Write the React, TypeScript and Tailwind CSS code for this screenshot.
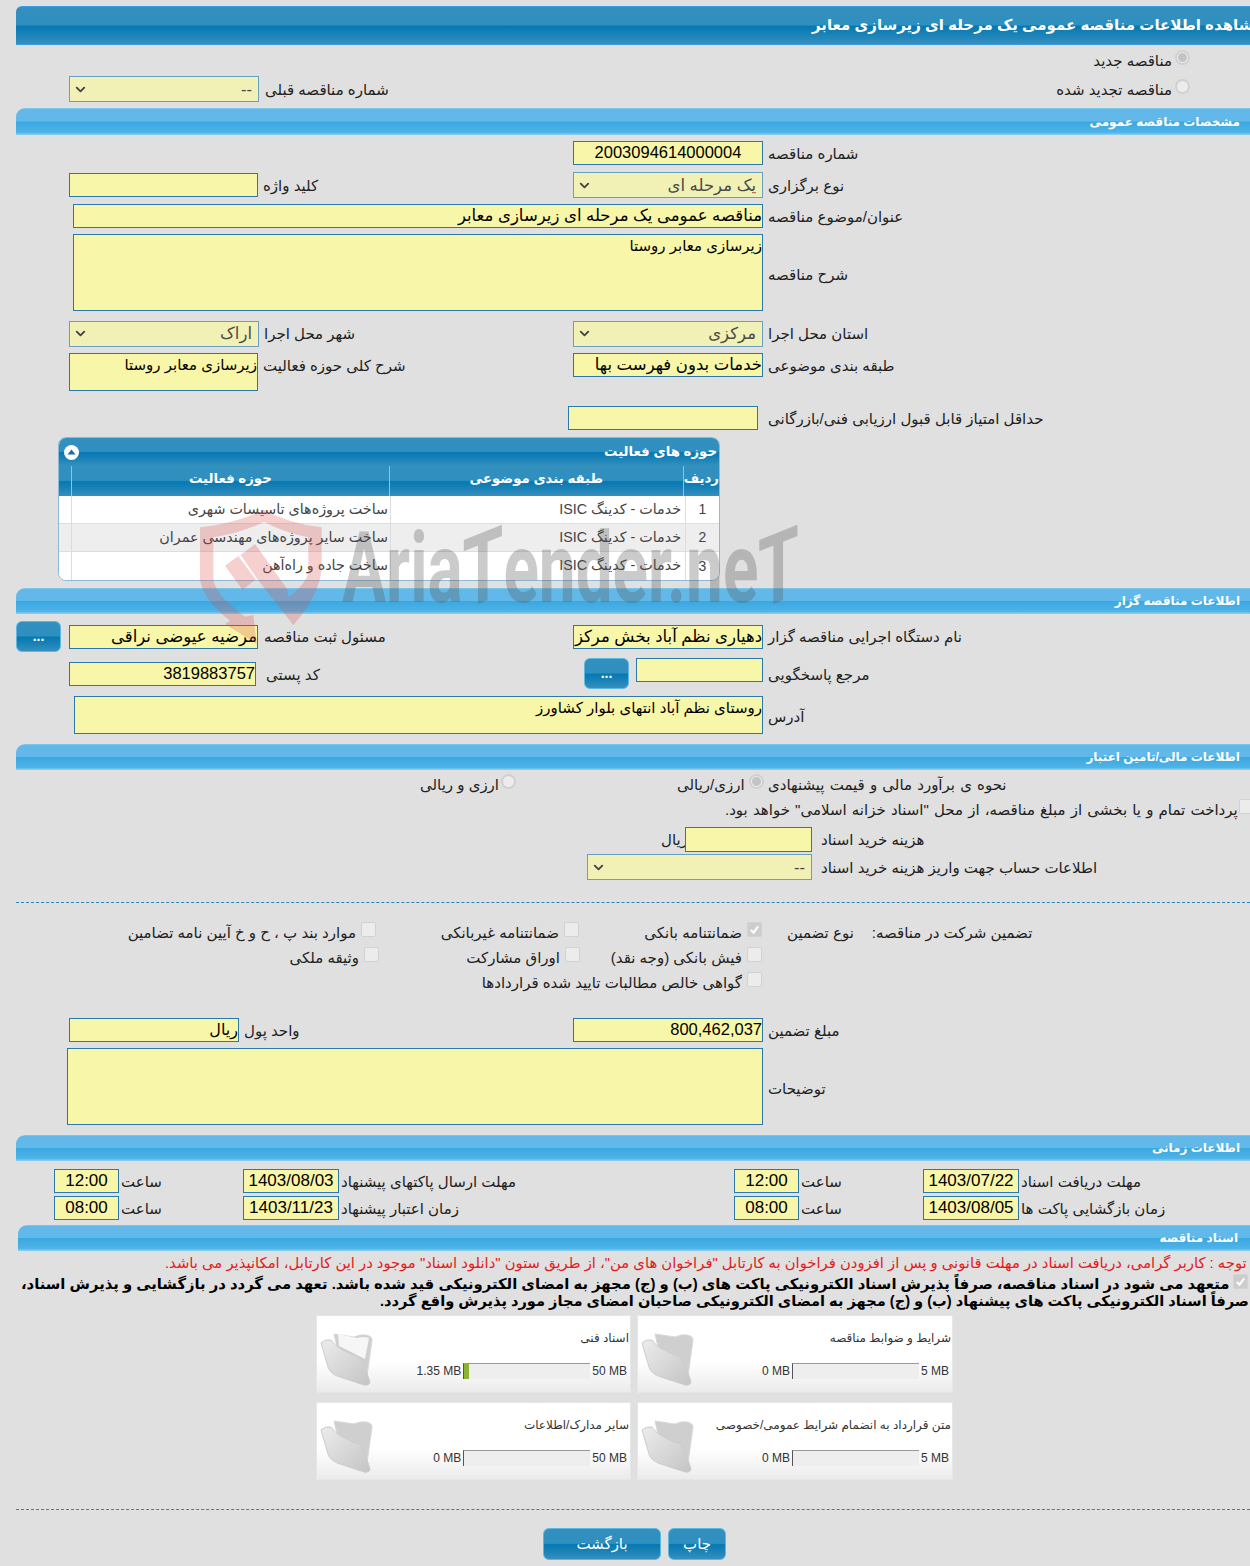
import React from "react";
import { ChevronDown } from "lucide-react";

const FONT = "font-['Liberation_Sans','DejaVu_Sans',sans-serif]";
const SECTION_BG =
  "bg-[linear-gradient(to_bottom,#8fd3f1_0,#62b9e9_4%,#62b9e9_48%,#3aa8e1_52%,#4fb3e6_90%,#8ed4f2_100%)]";
const DARK_BG =
  "bg-[linear-gradient(to_bottom,#3290bf_0,#2f8fbe_48%,#0678b2_52%,#1f85b8_80%,#3690bd_100%)]";

function Section({ title, ml = "ml-[16px]", mt, h = "h-[26px]", pr = "pr-[10px]" }: { title: string; ml?: string; mt: string; h?: string; pr?: string }) {
  return (
    <div className={`${ml} ${mt} ${h} ${pr} ${SECTION_BG} rounded-tl-[9px] flex items-center justify-end`}>
      <span dir="rtl" className="text-white font-bold text-[12px] whitespace-nowrap">{title}</span>
    </div>
  );
}

function Input({ w, h = "h-[24px]", children, cls = "", center }: { w: string; h?: string; children?: React.ReactNode; cls?: string; center?: boolean }) {
  return (
    <div
      dir="rtl"
      className={`${w} ${h} ${cls} shrink-0 bg-[#f8f6a8] border border-[#2b78ab] text-black whitespace-nowrap overflow-hidden leading-[21px] ${center ? "text-center" : "text-right"}`}
    >
      {children}
    </div>
  );
}

function Select({ w, value, h = "h-[26px]" }: { w: string; value: string; h?: string }) {
  return (
    <div className={`${w} ${h} shrink-0 bg-[#f1f0b5] border border-[#6a9fc4] flex items-center justify-between pl-[3px] pr-[6px] text-[#4a4a4a]`}>
      <ChevronDown size={15} strokeWidth={3} className="text-[#444]" />
      <span dir="rtl" className="text-[16.5px]">{value}</span>
    </div>
  );
}

function Label({ children, cls = "ml-[5px]" }: { children: React.ReactNode; cls?: string }) {
  return <span dir="rtl" className={`${cls} pt-[2px] whitespace-nowrap text-[15px] text-[#222]`}>{children}</span>;
}

function Radio({ checked }: { checked?: boolean }) {
  return (
    <span className="mb-[5px] w-[15px] h-[15px] shrink-0 rounded-full bg-[#ececec] border-2 border-[#d0d0d0] flex items-center justify-center">
      {checked && <span className="w-[9px] h-[9px] rounded-full bg-[#c4c4c4]" />}
    </span>
  );
}

function Check({ checked }: { checked?: boolean }) {
  return (
    <span className={`mb-[5px] w-[15px] h-[15px] shrink-0 rounded-[2px] border border-[#d2d2d2] flex items-center justify-center ${checked ? "bg-[#cdcdcd]" : "bg-[#ececec]"}`}>
      {checked && (
        <svg width="11" height="11" viewBox="0 0 12 12">
          <path d="M2 6.5 L5 9.5 L10 2.5" fill="none" stroke="#fff" strokeWidth="2.2" />
        </svg>
      )}
    </span>
  );
}

function CheckLabel({ text, checked, cls }: { text: string; checked?: boolean; cls: string }) {
  return (
    <div className={`${cls} flex items-center justify-end`}>
      <Label cls="">{text}</Label>
      <span className="ml-[5px] flex"><Check checked={checked} /></span>
    </div>
  );
}

function BlueBtn({ w, h, children, cls = "" }: { w: string; h: string; children: React.ReactNode; cls?: string }) {
  return (
    <div className={`${w} ${h} ${cls} ${DARK_BG} shrink-0 rounded-[6px] border border-[#5cb8e0] text-white flex items-center justify-center`}>
      {children}
    </div>
  );
}

function Folder({ paper }: { paper?: boolean }) {
  return (
    <svg width="56" height="58" viewBox="0 0 56 58" className="shrink-0">
      <defs>
        <linearGradient id="folderFront" x1="0" y1="0" x2="1" y2="1">
          <stop offset="0" stopColor="#ececec" />
          <stop offset="1" stopColor="#c4c4c4" />
        </linearGradient>
      </defs>
      <path d="M15 3 L35 6 Q42 3 47 4 Q53 5 53 9 L48 45 L44 52 L20 25 Z" fill="#cfcfcf" stroke="#d8d8d8" />
      {paper && <path d="M19 3 L38 7 Q45 5 50 7 L46 28 L20 15 Z" fill="#f6f6f6" />}
      <path d="M2 12 Q6 8 12 9 Q16 15 22 18 L34 24 Q40 25 42 28 Q48 40 51 51 Q50 55 45 54 L18 45 Q11 42 9 36 Z" fill="url(#folderFront)" stroke="#cccccc" />
    </svg>
  );
}

function FileCard({ title, used, max, fill, paper }: { title: string; used: string; max: string; fill?: boolean; paper?: boolean }) {
  return (
    <div className="h-[78px] pl-[2px] pr-[1px] flex bg-[linear-gradient(to_bottom,#ffffff_0,#ffffff_60%,#ebebeb_100%)] border border-[#e6e6e6]">
      <div className="pt-[15px]"><Folder paper={paper} /></div>
      <div className="flex-1 flex flex-col items-end">
        <span dir="rtl" className="mt-[13px] h-[18px] leading-[18px] text-[12px] text-[#333] whitespace-nowrap">{title}</span>
        <div className="mt-[15px] flex items-center text-[12px] text-[#333] pr-[2px]">
          <span>{used}</span>
          <div className="ml-[2px] w-[127px] h-[16px] bg-[#eeeeee] border-t border-t-[#999] border-l border-l-[#555] flex">
            {fill && <div className="w-[5px] h-full bg-[#8ab62f]" />}
          </div>
          <span className="ml-[2px]">{max}</span>
        </div>
      </div>
    </div>
  );
}

function Cell({ w, children, pr = "pr-[2px]" }: { w: string; children: React.ReactNode; pr?: string }) {
  return <div dir="rtl" className={`${w} ${pr} h-full flex items-center border-l border-[#ddd] text-[14.3px] text-[#444] whitespace-nowrap overflow-hidden`}>{children}</div>;
}

function TableRow({ n, activity, alt, h = "h-[28px]" }: { n: string; activity: string; alt?: boolean; h?: string }) {
  return (
    <div className={`${h} flex border-b border-[#dddddd] ${alt ? "bg-[#eeeeee]" : "bg-white"}`}>
      <div className="w-[12px]" />
      <Cell w="w-[319px]">{activity}</Cell>
      <Cell w="w-[295px]" pr="pr-[4px]">خدمات - کدینگ ISIC</Cell>
      <div className="flex-1 h-full flex items-center justify-center text-[14px] text-[#444] border-l border-[#ddd]">{n}</div>
    </div>
  );
}

function Head({ w, children }: { w: string; children?: React.ReactNode }) {
  return <div dir="rtl" className={`${w} h-full pb-[5px] flex items-center justify-center border-l border-[#8cc4e0] text-white font-bold text-[13.3px] whitespace-nowrap`}>{children}</div>;
}

function Watermark() {
  return (
    <>
      <svg width="150" height="150" viewBox="0 0 450 450" className="absolute left-[190px] top-[500px] pointer-events-none">
        <g fill="#d9534f" fillOpacity="0.27">
          <path d="M222 30 Q130 72 30 82 L30 240 Q40 300 120 362 L105 372 L200 432 L190 345 L165 350 Q70 280 70 235 L70 112 Q150 100 222 66 Q290 100 355 112 L355 215 Q350 250 296 290 L310 375 Q385 290 395 210 L395 82 Q300 72 222 30 Z" />
          <path d="M105 197 L145 168 L197 238 L158 270 Z" />
          <path d="M152 165 L195 132 L292 268 L310 375 L200 235 Z" />
        </g>
      </svg>
      <div className="absolute left-[342px] top-[529px] h-[80px] text-[#555] opacity-30 font-['Roboto',sans-serif] font-bold text-[98px] leading-[80px] whitespace-nowrap origin-bottom-left scale-x-[0.67] pointer-events-none">
        Aria<span className="inline-block skew-y-[-15deg]">T</span>ender.ne<span className="inline-block skew-y-[-15deg]">T</span>
      </div>
    </>
  );
}

export default function App() {
  return (
    <div dir="ltr" className={`relative w-[1250px] h-[1566px] overflow-hidden bg-[#e0e0e0] text-[14px] ${FONT}`}>
      {/* Title */}
      <div className={`ml-[16px] mt-[6px] h-[39px] rounded-tl-[6px] border-y border-[#3a9be6] flex items-center pl-[796px] ${DARK_BG}`}>
        <span dir="rtl" className="text-white font-bold text-[15px] whitespace-nowrap w-max">مشاهده اطلاعات مناقصه عمومی یک مرحله ای زیرسازی معابر</span>
      </div>

      <div className="mt-[5px] h-[20px] flex items-center justify-end pr-[60px]">
        <Label cls="">مناقصه جدید</Label>
        <span className="ml-[3px] flex"><Radio checked /></span>
      </div>
      <div className="mt-[6px] h-[26px] flex items-center pl-[69px]">
        <Select w="w-[190px]" value="--" />
        <Label cls="ml-[6px]">شماره مناقصه قبلی</Label>
        <div className="flex-1 flex items-center justify-end pr-[60px]">
          <Label cls="">مناقصه تجدید شده</Label>
          <span className="ml-[3px] flex"><Radio /></span>
        </div>
      </div>

      <Section title="مشخصات مناقصه عمومی" mt="mt-[6px]" h="h-[27px]" />

      <div className="mt-[6px] h-[24px] flex items-center pl-[573px]">
        <Input w="w-[190px]" center cls="text-[16.5px]">2003094614000004</Input>
        <Label>شماره مناقصه</Label>
      </div>
      <div className="mt-[7px] h-[26px] flex items-center">
        <div className="w-[573px] pl-[69px] flex items-center">
          <Input w="w-[189px]" />
          <Label>کلید واژه</Label>
        </div>
        <Select w="w-[190px]" value="یک مرحله ای" />
        <Label>نوع برگزاری</Label>
      </div>
      <div className="mt-[6px] h-[24px] flex items-center pl-[73px]">
        <Input w="w-[690px]" cls="text-[16.5px]">مناقصه عمومی یک مرحله ای زیرسازی معابر</Input>
        <Label>عنوان/موضوع مناقصه</Label>
      </div>
      <div className="mt-[6px] h-[77px] flex items-center pl-[73px]">
        <Input w="w-[690px]" h="h-[77px]" cls="text-[15px]">زیرسازی معابر روستا</Input>
        <Label cls="ml-[5px] mt-[4px]">شرح مناقصه</Label>
      </div>
      <div className="mt-[9px] h-[27px] flex items-center">
        <div className="w-[573px] pl-[69px] flex items-center">
          <Select w="w-[190px]" value="اراک" />
          <Label>شهر محل اجرا</Label>
        </div>
        <Select w="w-[190px]" value="مرکزی" />
        <Label>استان محل اجرا</Label>
      </div>
      <div className="mt-[6px] h-[38px] flex items-start">
        <div className="w-[573px] pl-[69px] flex items-start">
          <Input w="w-[189px]" h="h-[38px]" cls="text-[15px]">زیرسازی معابر روستا</Input>
          <Label>شرح کلی حوزه فعالیت</Label>
        </div>
        <Input w="w-[190px]" cls="text-[16.5px]">خدمات بدون فهرست بها</Input>
        <Label>طبقه بندی موضوعی</Label>
      </div>
      <div className="mt-[15px] h-[24px] flex items-center pl-[568px]">
        <Input w="w-[190px]" />
        <Label cls="ml-[10px]">حداقل امتیاز قابل قبول ارزیابی فنی/بازرگانی</Label>
      </div>

      {/* Table */}
      <div className="ml-[58px] mt-[7px] w-[662px] h-[144px] rounded-[8px] border border-[#8cb9d6] bg-white overflow-hidden">
        <div className={`h-[28px] flex items-center justify-between pl-[5px] pr-[2px] ${DARK_BG}`}>
          <span className="w-[15px] h-[15px] rounded-full bg-white flex items-center justify-center">
            <svg width="9" height="6" viewBox="0 0 9 6"><path d="M0.5 5.5 L4.5 0.5 L8.5 5.5 Z" fill="#1c6d99" /></svg>
          </span>
          <span dir="rtl" className="text-white font-bold text-[13.3px]">حوزه های فعالیت</span>
        </div>
        <div className={`h-[30px] flex ${DARK_BG}`}>
          <div className="w-[12px]" />
          <Head w="w-[319px]">حوزه فعالیت</Head>
          <Head w="w-[295px]">طبقه بندی موضوعی</Head>
          <Head w="flex-1">ردیف</Head>
        </div>
        <TableRow n="1" activity="ساخت پروژه‌های تاسیسات شهری" />
        <TableRow n="2" activity="ساخت سایر پروژه‌های مهندسی عمران" alt />
        <TableRow n="3" activity="ساخت جاده و راه‌آهن" h="h-[29px]" />
      </div>

      <Section title="اطلاعات مناقصه گزار" mt="mt-[7px]" />

      <div className="mt-[7px] h-[31px] flex items-center">
        <div className="w-[573px] pl-[16px] flex items-center">
          <BlueBtn w="w-[45px]" h="h-[31px]" cls="mr-[8px]"><span className="text-[14px] font-bold">...</span></BlueBtn>
          <Input w="w-[189px]" cls="text-[16.5px]">مرضیه عیوضی نراقی</Input>
          <Label cls="ml-[6px]">مسئول ثبت مناقصه</Label>
        </div>
        <Input w="w-[190px]" cls="text-[16.5px]">دهیاری نظم آباد بخش مرکز</Input>
        <Label>نام دستگاه اجرایی مناقصه گزار</Label>
      </div>
      <div className="mt-[6px] h-[32px] flex items-start">
        <div className="w-[584px] pl-[69px] pt-[4px] flex items-center">
          <Input w="w-[187px]" cls="text-[16.5px]">3819883757</Input>
          <Label cls="ml-[10px]">کد پستی</Label>
        </div>
        <BlueBtn w="w-[45px]" h="h-[31px]"><span className="text-[14px] font-bold">...</span></BlueBtn>
        <Input w="w-[127px]" cls="ml-[7px]" />
        <Label cls="ml-[5px] mt-[4px]">مرجع پاسخگویی</Label>
      </div>
      <div className="mt-[6px] h-[38px] flex items-center pl-[74px]">
        <Input w="w-[689px]" h="h-[38px]" cls="text-[15px]">روستای نظم آباد انتهای بلوار کشاورز</Input>
        <Label cls="ml-[5px] mt-[2px]">آدرس</Label>
      </div>

      <Section title="اطلاعات مالی/تامین اعتبار" mt="mt-[10px]" />

      <div className="mt-[4px] h-[20px] flex items-center pl-[420px]">
        <div className="w-[257px] flex items-center">
          <Label cls="">ارزی و ریالی</Label>
          <span className="ml-[2px] flex"><Radio /></span>
        </div>
        <div className="w-[91px] flex items-center">
          <Label cls="">ارزی/ریالی</Label>
          <span className="ml-[4px] flex"><Radio checked /></span>
        </div>
        <Label cls="[word-spacing:1px]">نحوه ی برآورد مالی و قیمت پیشنهادی</Label>
      </div>
      <div className="mt-[5px] h-[20px] flex items-center pl-[725px]">
        <Label cls="[word-spacing:1px]">پرداخت تمام و یا بخشی از مبلغ مناقصه، از محل "اسناد خزانه اسلامی" خواهد بود.</Label>
        <span className="ml-[1px] flex"><Check /></span>
      </div>
      <div className="mt-[8px] h-[25px] flex items-center pl-[661px]">
        <div className="w-[24px] flex items-center"><Label cls="">ریال</Label></div>
        <Input w="w-[127px]" h="h-[25px]" />
        <Label cls="ml-[9px]">هزینه خرید اسناد</Label>
      </div>
      <div className="mt-[2px] h-[26px] flex items-center pl-[587px]">
        <Select w="w-[225px]" value="--" />
        <Label cls="ml-[9px]">اطلاعات حساب جهت واریز هزینه خرید اسناد</Label>
      </div>

      <div className="ml-[16px] mt-[22px] border-t border-dashed border-[#2b86b5]" />

      <div className="mt-[19px] h-[20px] flex items-center">
        <CheckLabel cls="w-[376px]" text="موارد بند پ ، ح و خ آیین نامه تضامین" />
        <CheckLabel cls="w-[203px]" text="ضمانتنامه غیربانکی" />
        <CheckLabel cls="w-[183px]" text="ضمانتنامه بانکی" checked />
        <Label cls="ml-[25px]">نوع تضمین</Label>
        <Label cls="ml-[18px]">تضمین شرکت در مناقصه:</Label>
      </div>
      <div className="mt-[5px] h-[20px] flex items-center">
        <CheckLabel cls="w-[379px]" text="وثیقه ملکی" />
        <CheckLabel cls="w-[201px]" text="اوراق مشارکت" />
        <CheckLabel cls="w-[182px]" text="فیش بانکی (وجه نقد)" />
      </div>
      <div className="mt-[5px] h-[20px] flex items-center">
        <CheckLabel cls="w-[762px]" text="گواهی خالص مطالبات تایید شده قراردادها" />
      </div>

      <div className="mt-[26px] h-[24px] flex items-center">
        <div className="w-[573px] pl-[69px] flex items-center">
          <Input w="w-[170px]" cls="text-[16px]">ریال</Input>
          <Label>واحد پول</Label>
        </div>
        <Input w="w-[190px]" cls="text-[16.5px]">800,462,037</Input>
        <Label>مبلغ تضمین</Label>
      </div>
      <div className="mt-[6px] h-[77px] flex items-center pl-[67px]">
        <Input w="w-[696px]" h="h-[77px]" />
        <Label cls="ml-[5px] mt-[4px]">توضیحات</Label>
      </div>

      <Section title="اطلاعات زمانی" mt="mt-[10px]" />

      <div className="mt-[8px] h-[24px] flex items-center pl-[54px] text-[17px]">
        <div className="w-[189px] flex items-center"><Input w="w-[65px]" center>12:00</Input><Label cls="ml-[2px]">ساعت</Label></div>
        <div className="w-[491px] flex items-center"><Input w="w-[96px]" center>1403/08/03</Input><Label cls="ml-[2px]">مهلت ارسال پاکتهای پیشنهاد</Label></div>
        <div className="w-[189px] flex items-center"><Input w="w-[65px]" center>12:00</Input><Label cls="ml-[2px]">ساعت</Label></div>
        <div className="flex items-center"><Input w="w-[96px]" center>1403/07/22</Input><Label cls="ml-[2px]">مهلت دریافت اسناد</Label></div>
      </div>
      <div className="mt-[3px] h-[24px] flex items-center pl-[54px] text-[17px]">
        <div className="w-[189px] flex items-center"><Input w="w-[65px]" center>08:00</Input><Label cls="ml-[2px]">ساعت</Label></div>
        <div className="w-[491px] flex items-center"><Input w="w-[96px]" center>1403/11/23</Input><Label cls="ml-[2px]">زمان اعتبار پیشنهاد</Label></div>
        <div className="w-[189px] flex items-center"><Input w="w-[65px]" center>08:00</Input><Label cls="ml-[2px]">ساعت</Label></div>
        <div className="flex items-center"><Input w="w-[96px]" center>1403/08/05</Input><Label cls="ml-[2px]">زمان بازگشایی پاکت ها</Label></div>
      </div>

      <Section title="اسناد مناقصه" ml="ml-[18px]" mt="mt-[5px]" pr="pr-[12px]" />

      <div className="mt-[2px] h-[20px] flex items-center pl-[165px]">
        <span dir="rtl" className="text-[14.8px] text-[#e01b1b] whitespace-nowrap w-max">توجه : کاربر گرامی، دریافت اسناد در مهلت قانونی و پس از افزودن فراخوان به کارتابل "فراخوان های من"، از طریق ستون "دانلود اسناد" موجود در این کارتابل، امکانپذیر می باشد.</span>
      </div>
      <div className="mt-[2px] h-[18px] flex items-center pl-[21px]">
        <span dir="rtl" className="font-bold text-[14.8px] text-black whitespace-nowrap w-max">متعهد می شود در اسناد مناقصه، صرفاً پذیرش اسناد الکترونیکی پاکت های (ب) و (ج) مجهز به امضای الکترونیکی قید شده باشد. تعهد می گردد در بازگشایی و پذیرش اسناد،</span>
        <span className="ml-[4px] flex"><Check checked /></span>
      </div>
      <div className="h-[18px] flex items-center pl-[380px]">
        <span dir="rtl" className="font-bold text-[14.6px] text-black whitespace-nowrap w-max">صرفاً اسناد الکترونیکی پاکت های پیشنهاد (ب) و (ج) مجهز به امضای الکترونیکی صاحبان امضای مجاز مورد پذیرش واقع گردد.</span>
      </div>

      <div className="mt-[4px] ml-[316px] w-[637px] grid grid-cols-[315px_316px] gap-x-[6px] gap-y-[9px]">
        <FileCard title="اسناد فنی" used="1.35 MB" max="50 MB" fill paper />
        <FileCard title="شرایط و ضوابط مناقصه" used="0 MB" max="5 MB" />
        <FileCard title="سایر مدارک/اطلاعات" used="0 MB" max="50 MB" />
        <FileCard title="متن قرارداد به انضمام شرایط عمومی/خصوصی" used="0 MB" max="5 MB" />
      </div>

      <div className="ml-[16px] mt-[29px] border-t border-dashed border-[#2b86b5]" />

      <div className="mt-[18px] flex pl-[543px] gap-[7px]">
        <BlueBtn w="w-[118px]" h="h-[32px]"><span dir="rtl" className="text-[15px]">بازگشت</span></BlueBtn>
        <BlueBtn w="w-[58px]" h="h-[32px]"><span dir="rtl" className="text-[15px]">چاپ</span></BlueBtn>
      </div>

      <Watermark />
    </div>
  );
}
